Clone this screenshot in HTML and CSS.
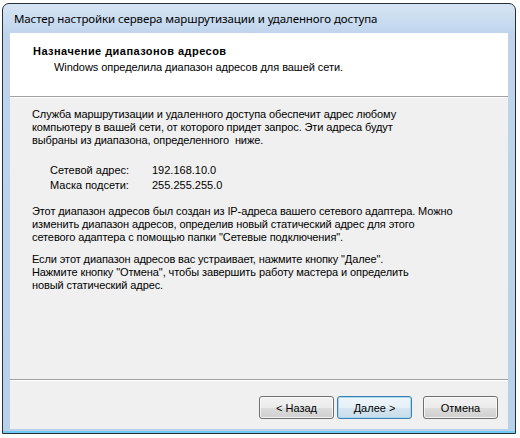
FILE: index.html
```html
<!DOCTYPE html>
<html lang="ru">
<head>
<meta charset="utf-8">
<link rel="stylesheet" href="styles.css">
</head>
<body>
<div class="window">
  <div class="titlebar">Мастер настройки сервера маршрутизации и удаленного доступа</div>
  <div class="client">
    <div class="header">
      <div class="h-title">Назначение диапазонов адресов</div>
      <div class="h-sub">Windows определила диапазон адресов для вашей сети.</div>
    </div>
    <div class="sep"></div>
    <div class="body">
      <p class="para p1">Служба маршрутизации и удаленного доступа обеспечит адрес любому<br>компьютеру в вашей сети, от которого придет запрос. Эти адреса будут<br>выбраны из диапазона, определенного &nbsp;ниже.</p>
      <div class="fields">
        <div class="field"><span class="label">Сетевой адрес:</span><span class="value">192.168.10.0</span></div>
        <div class="field"><span class="label">Маска подсети:</span><span class="value">255.255.255.0</span></div>
      </div>
      <p class="para p2">Этот диапазон адресов был создан из IP-адреса вашего сетевого адаптера. Можно<br>изменить диапазон адресов, определив новый статический адрес для этого<br>сетевого адаптера с помощью папки "Сетевые подключения".</p>
      <p class="para p3">Если этот диапазон адресов вас устраивает, нажмите кнопку "Далее".<br>Нажмите кнопку "Отмена", чтобы завершить работу мастера и определить<br>новый статический адрес.</p>
    </div>
    <div class="sep"></div>
    <div class="footer">
      <button class="btn">&lt; Назад</button>
      <button class="btn default">Далее &gt;</button>
      <button class="btn cancel">Отмена</button>
    </div>
  </div>
</div>
</body>
</html>
```

FILE: styles.css
```css
html, body {
  margin: 0;
  padding: 0;
  background: #ffffff;
}
body {
  width: 520px;
  height: 438px;
  overflow: hidden;
}
.window {
  box-sizing: border-box;
  margin: 3px 0 0 2px;
  width: 514px;
  height: 431px;
  border: 1px solid #2a2f36;
  border-radius: 7px 7px 0 0;
  background: linear-gradient(to bottom, #d6e5f4 0px, #bfd4ec 30px, #b9d0ea 100%);
  display: flex;
  flex-direction: column;
  padding: 0 7px 4px 7px;
  box-shadow: inset 0 -2px 0 #6fcaf2;
  font-family: "Liberation Sans", Arial, sans-serif;
}
.titlebar {
  height: 29px;
  flex: none;
  box-sizing: border-box;
  padding: 7px 0 0 4px;
  font-family: "Noto Sans", "Open Sans", sans-serif;
  font-size: 11.5px;
  letter-spacing: -0.1px;
  line-height: 16px;
  color: #000;
  white-space: nowrap;
}
.client {
  flex: 1;
  background: #f0f0f0;
  display: flex;
  flex-direction: column;
  font-size: 11px;
  color: #000;
}
.header {
  height: 63px;
  flex: none;
  background: #fff;
  box-sizing: border-box;
  padding: 12px 0 0 23px;
  line-height: 13px;
}
.h-title {
  font-weight: bold;
  font-size: 11px;
  letter-spacing: 0.45px;
  white-space: nowrap;
}
.h-sub {
  margin-top: 3px;
  padding-left: 21px;
  white-space: nowrap;
  letter-spacing: -0.05px;
}
.sep {
  height: 1px;
  flex: none;
  background: #a0a0a0;
  border-bottom: 1px solid #ffffff;
}
.body {
  flex: 1;
  padding: 10px 0 0 22px;
  line-height: 13px;
}
.para {
  margin: 0;
  white-space: nowrap;
  letter-spacing: -0.1px;
}
.fields {
  margin: 16px 0 0 18px;
}
.field {
  display: flex;
  height: 15px;
  line-height: 15px;
}
.label {
  width: 102px;
}
.p2 {
  margin-top: 12px;
}
.p3 {
  margin-top: 9px;
}
.footer {
  height: 48px;
  flex: none;
  display: flex;
  align-items: flex-start;
  justify-content: flex-end;
  padding: 15px 10px 0 0;
  box-sizing: border-box;
  gap: 3px;
}
.btn {
  width: 75px;
  height: 23px;
  box-sizing: border-box;
  border: 1px solid #707070;
  border-radius: 3px;
  background: linear-gradient(to bottom, #f2f2f2 0%, #ebebeb 50%, #dddddd 51%, #cfcfcf 100%);
  box-shadow: inset 0 0 0 1px rgba(255,255,255,0.7);
  font-family: "Liberation Sans", Arial, sans-serif;
  font-size: 11px;
  color: #000;
  padding: 0;
}
.btn.default {
  border-color: #3c7fb1;
  box-shadow: inset 0 0 0 1px #a9d8f3;
  background: linear-gradient(to bottom, #eef6fb 0%, #e6f0f7 50%, #d6e6f1 51%, #c8dce9 100%);
}
.btn.cancel {
  margin-left: 8px;
}
```
